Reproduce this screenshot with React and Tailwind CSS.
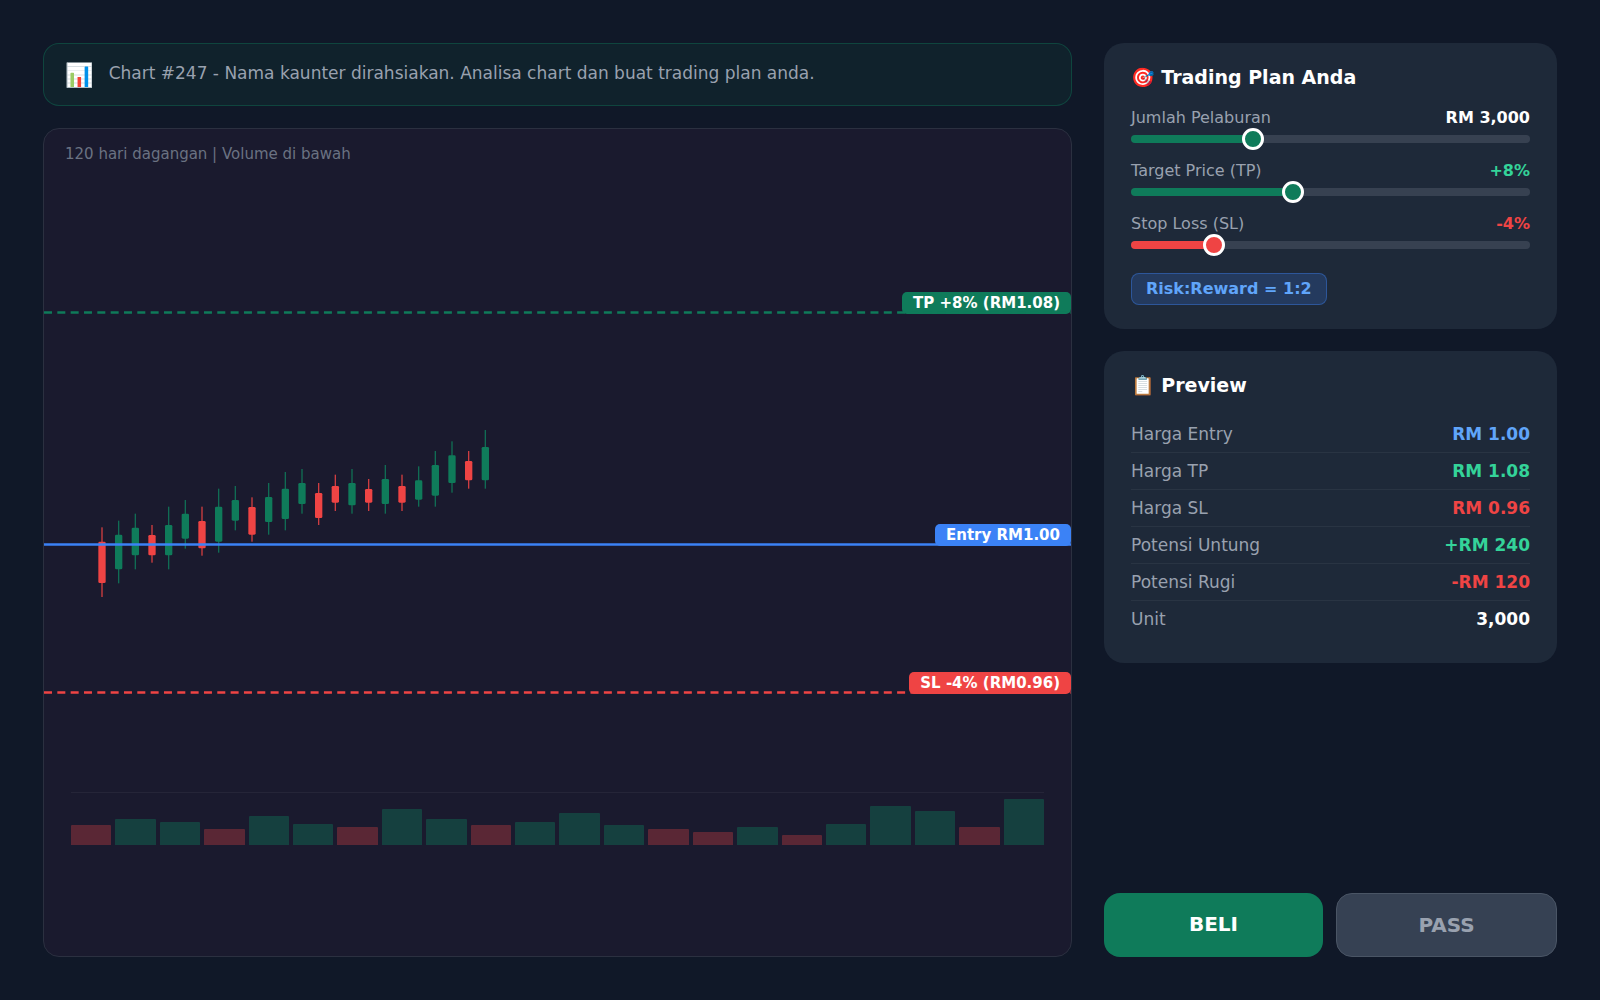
import { useState } from 'react'

// [direction, high, bodyTop, bodyBottom, low]
const CANDLES = [
  ['down', 352, 395, 519, 561],
  ['up', 332, 374, 478, 520],
  ['up', 311, 353, 436, 478],
  ['down', 345, 375, 436, 458],
  ['up', 290, 345, 436, 478],
  ['up', 270, 311, 386, 416],
  ['down', 290, 333, 415, 437],
  ['up', 236, 290, 395, 428],
  ['up', 228, 270, 332, 361],
  ['down', 262, 291, 374, 395],
  ['up', 219, 261, 336, 374],
  ['up', 186, 236, 327, 361],
  ['up', 177, 219, 282, 311],
  ['down', 219, 249, 324, 345],
  ['down', 194, 228, 278, 303],
  ['up', 177, 219, 286, 311],
  ['down', 207, 237, 278, 303],
  ['up', 165, 207, 282, 311],
  ['down', 194, 228, 278, 303],
  ['up', 169, 211, 269, 290],
  ['up', 123, 165, 257, 290],
  ['up', 94, 136, 219, 248],
  ['down', 123, 153, 211, 236],
  ['up', 60, 111, 211, 236],
]

const VOLUMES = [
  ['down', 38], ['up', 50], ['up', 45], ['down', 30], ['up', 55], ['up', 40],
  ['down', 35], ['up', 70], ['up', 50], ['down', 38], ['up', 45], ['up', 62],
  ['up', 38], ['down', 30], ['down', 25], ['up', 35], ['down', 20], ['up', 40],
  ['up', 75], ['up', 65], ['down', 35], ['up', 88],
]

const PREVIEW = [
  ['Harga Entry', 'RM 1.00', 'text-[#60a5fa]'],
  ['Harga TP', 'RM 1.08', 'text-[#34d399]'],
  ['Harga SL', 'RM 0.96', 'text-[#ef4444]'],
  ['Potensi Untung', '+RM 240', 'text-[#34d399]'],
  ['Potensi Rugi', '-RM 120', 'text-[#ef4444]'],
  ['Unit', '3,000', 'text-white'],
]

function Candles() {
  return (
    <svg
      className="absolute top-1/2 left-0 h-[200px] w-[450px] -translate-y-[133px]"
      viewBox="0 0 1350 600"
      aria-hidden="true"
    >
      {CANDLES.map(([dir, high, top, bottom, low], i) => (
        <g key={i} transform={`translate(${174 + i * 50} 0)`} fill={dir === 'up' ? '#0f7b5a' : '#ef4444'}>
          <rect x="-2" y={high} width="4" height={low - high} opacity="0.85" />
          <rect x="-11" y={top} width="22" height={bottom - top} rx="4" />
        </g>
      ))}
    </svg>
  )
}

function PriceLine({ label, position, color, background, dashed }) {
  return (
    <div className={`absolute inset-x-0 ${position}`}>
      <span
        className={`absolute right-0 bottom-0 rounded-[5px] px-[11px] text-[15px] leading-[22px] font-bold text-white ${background}`}
      >
        {label}
      </span>
      <svg className="relative block h-[3px] w-full" aria-hidden="true">
        <line x1="0" y1="1.5" x2="100%" y2="1.5" stroke={color} strokeWidth="2.7" strokeDasharray={dashed ? '8 5.33' : undefined} />
      </svg>
    </div>
  )
}

function ChartPanel() {
  return (
    <section className="relative flex-1 overflow-hidden rounded-2xl border border-[#2b3040] bg-[#1a1a2e]">
      <p className="px-[21px] pt-[15px] text-[15px] leading-5 text-gray-500">120 hari dagangan | Volume di bawah</p>
      <Candles />
      <PriceLine label="TP +8% (RM1.08)" position="top-[22%]" color="#0f7b5a" background="bg-[#0f7b5a]" dashed />
      <PriceLine label="Entry RM1.00" position="top-1/2" color="#3b82f6" background="bg-[#3b82f6]" />
      <PriceLine label="SL -4% (RM0.96)" position="top-[68%]" color="#ef4444" background="bg-[#ef4444]" dashed />
      <div className="absolute inset-x-[27px] bottom-[111px] flex h-[53px] items-end gap-1 border-t border-white/5">
        {VOLUMES.map(([dir, height], i) => (
          <div
            key={i}
            className={`flex-1 rounded-t-[1px] ${dir === 'up' ? 'bg-[#0f7b5a]/40' : 'bg-[#ef4444]/30'}`}
            style={{ height: `${height}%` }}
          />
        ))}
      </div>
    </section>
  )
}

function Slider({ id, label, min, max, step, value, onChange, format, color, tone, thumb }) {
  const ratio = (value - min) / (max - min)
  const fill = `calc(11px + (100% - 22px) * ${ratio})`
  return (
    <div>
      <div className="flex justify-between text-base leading-5">
        <label htmlFor={id} className="text-gray-400">{label}</label>
        <output htmlFor={id} className={`font-bold ${tone}`}>{format(value)}</output>
      </div>
      <input
        id={id}
        type="range"
        min={min}
        max={max}
        step={step}
        value={value}
        onChange={(e) => onChange(Number(e.target.value))}
        className={`mt-[7px] block h-2 w-full cursor-pointer appearance-none rounded-full [&::-webkit-slider-thumb]:size-[22px] [&::-webkit-slider-thumb]:appearance-none [&::-webkit-slider-thumb]:rounded-full [&::-webkit-slider-thumb]:border-[3px] [&::-webkit-slider-thumb]:border-white ${thumb}`}
        style={{ background: `linear-gradient(to right, ${color} ${fill}, #374151 ${fill})` }}
      />
    </div>
  )
}

function PlanCard() {
  const [amount, setAmount] = useState(3000)
  const [target, setTarget] = useState(8)
  const [stop, setStop] = useState(4)

  return (
    <section className="rounded-[20px] bg-gray-800 px-[27px] pt-[23px] pb-6">
      <h2 className="text-[19px] leading-[22px] font-bold text-white">🎯 Trading Plan Anda</h2>
      <div className="mt-5 space-y-[18px]">
        <Slider
          id="amount"
          label="Jumlah Pelaburan"
          min={500}
          max={9000}
          step={100}
          value={amount}
          onChange={setAmount}
          format={(v) => `RM ${v.toLocaleString('en-US')}`}
          color="#0f7b5a"
          tone="text-white"
          thumb="[&::-webkit-slider-thumb]:bg-[#0f7b5a]"
        />
        <Slider
          id="target"
          label="Target Price (TP)"
          min={0}
          max={20}
          step={1}
          value={target}
          onChange={setTarget}
          format={(v) => `+${v}%`}
          color="#0f7b5a"
          tone="text-[#34d399]"
          thumb="[&::-webkit-slider-thumb]:bg-[#0f7b5a]"
        />
        <Slider
          id="stop"
          label="Stop Loss (SL)"
          min={0}
          max={21}
          step={1}
          value={stop}
          onChange={setStop}
          format={(v) => `-${v}%`}
          color="#ef4444"
          tone="text-[#ef4444]"
          thumb="[&::-webkit-slider-thumb]:bg-[#ef4444]"
        />
      </div>
      <div className="mt-6 inline-block rounded-lg border border-[#3b82f6]/40 bg-[#3b82f6]/20 px-[14px] align-top text-base leading-[30px] font-bold text-[#60a5fa]">
        Risk:Reward = 1:{target / stop}
      </div>
    </section>
  )
}

function PreviewCard() {
  return (
    <section className="rounded-[20px] bg-gray-800 px-[27px] pt-[23px] pb-[25px]">
      <h2 className="text-[19px] leading-[22px] font-bold text-white">📋 Preview</h2>
      <table className="mt-5 w-full text-[17px] leading-9">
        <tbody>
          {PREVIEW.map(([name, value, tone]) => (
            <tr key={name} className="border-b border-white/5 last:border-transparent">
              <th scope="row" className="p-0 text-left font-normal text-gray-400">{name}</th>
              <td className={`p-0 text-right font-bold ${tone}`}>{value}</td>
            </tr>
          ))}
        </tbody>
      </table>
    </section>
  )
}

export default function App() {
  return (
    <main className="grid min-h-screen grid-cols-[minmax(0,1fr)_453px] gap-8 bg-gray-900 p-[43px] font-['DejaVu_Sans','Noto_Color_Emoji',sans-serif]">
      <div className="flex flex-col gap-[22px]">
        <header className="flex h-[63px] items-center gap-[15px] rounded-2xl border border-[#0f7b5a]/40 bg-[#0f7b5a]/10 px-[21px]">
          <span className="text-[23px] leading-8">📊</span>
          <p className="pb-1 text-[17px] leading-5 text-gray-400">
            Chart #247 - Nama kaunter dirahsiakan. Analisa chart dan buat trading plan anda.
          </p>
        </header>
        <ChartPanel />
      </div>
      <aside className="flex flex-col gap-[22px]">
        <PlanCard />
        <PreviewCard />
        <div className="mt-auto flex gap-[13px] text-xl leading-6 font-bold">
          <button type="button" className="h-16 flex-1 rounded-2xl bg-[#0f7b5a] pb-0.5 text-white">BELI</button>
          <button type="button" className="h-16 flex-1 rounded-2xl border border-gray-600 bg-gray-700 text-gray-400">PASS</button>
        </div>
      </aside>
    </main>
  )
}
